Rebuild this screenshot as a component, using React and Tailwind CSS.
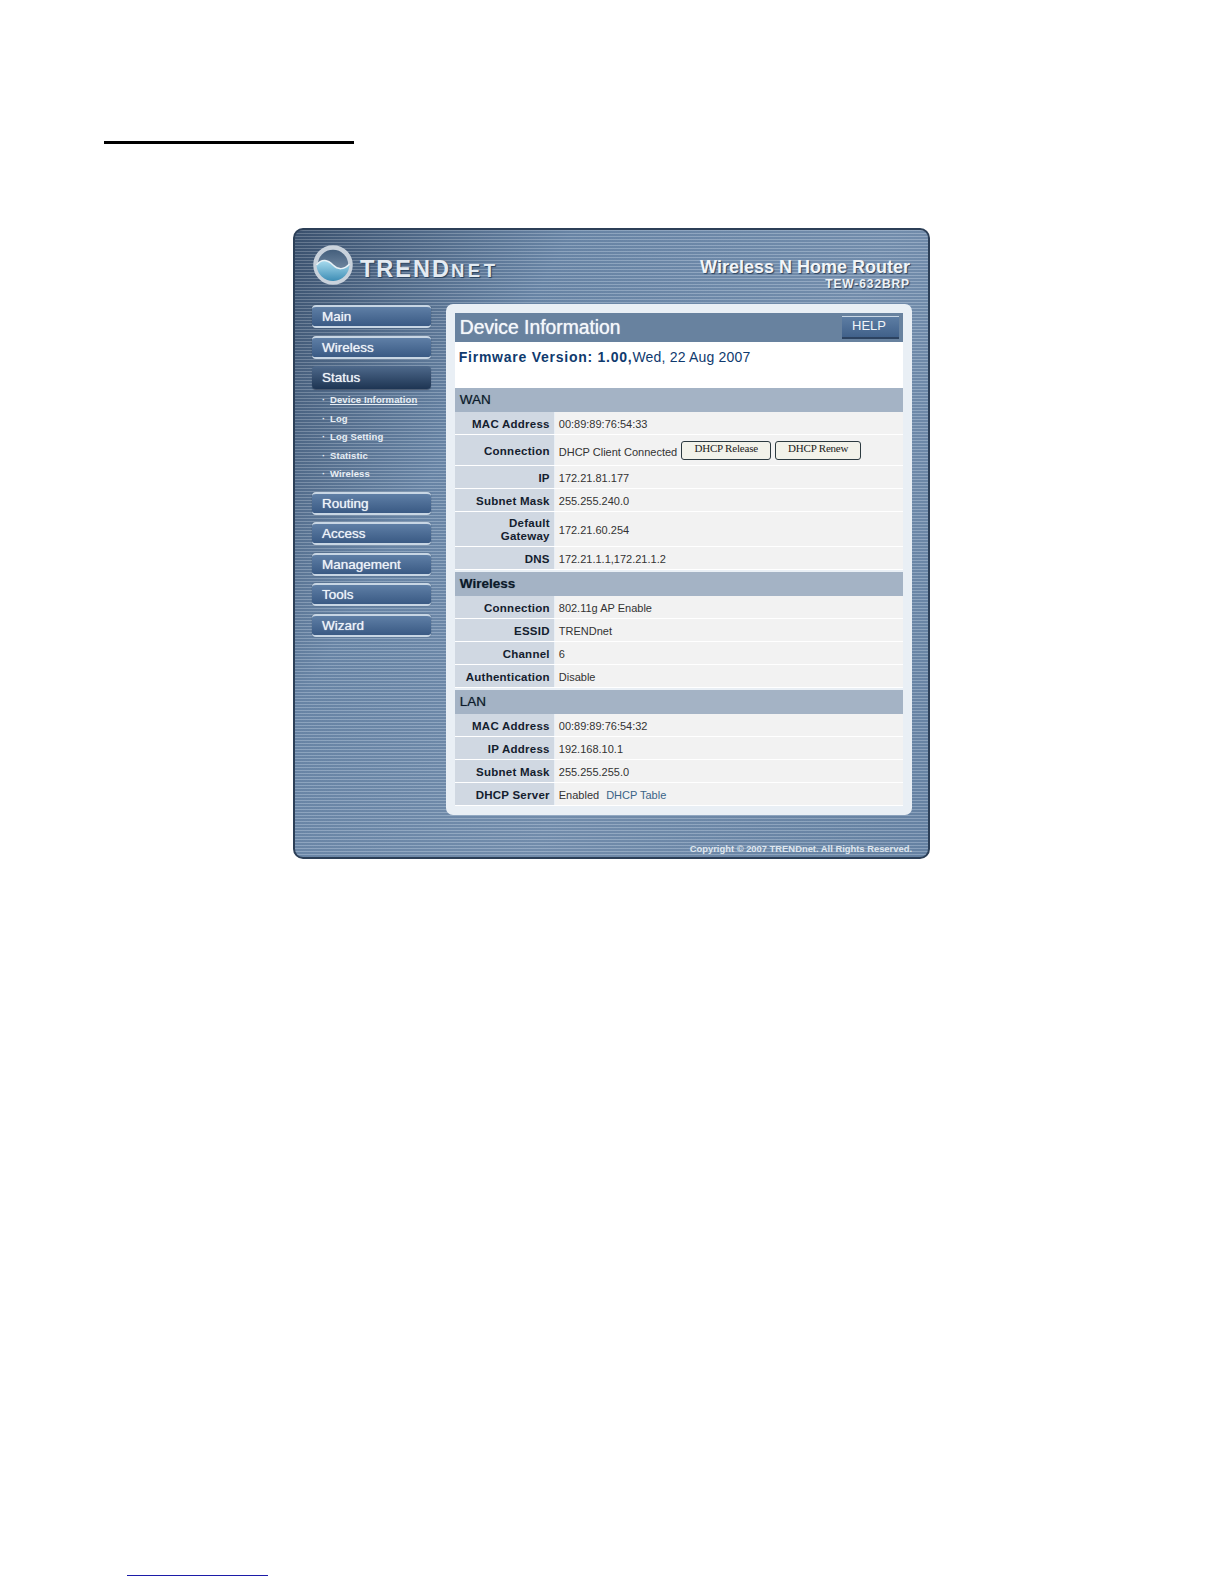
import React from "react";

const stripes = "bg-[repeating-linear-gradient(180deg,rgba(255,255,255,0.2)_0px,rgba(255,255,255,0.2)_1px,rgba(40,60,90,0.1)_1px,rgba(40,60,90,0.1)_3px)]";

function NavButton({ label, active }) {
  return (
    <div
      className={
        active
          ? "h-[23px] w-[119px] rounded-sm bg-gradient-to-b from-[#4f6a8c] to-[#1e3553] pl-[10px] text-[13.5px] leading-[24px] font-normal text-[#f0f4f8] shadow-[0_1px_1px_rgba(20,30,50,0.5)] [text-shadow:0_0_1px_#dfe7ef]"
          : "h-[23px] w-[119px] rounded-sm border-t-2 border-b-2 border-t-[#c8d6e4] border-b-[#c8d6e4] bg-gradient-to-b from-[#5f7fa6] to-[#3a5a84] pl-[10px] text-[13.5px] leading-[19px] font-normal text-[#eef3f8] shadow-[0_0_1px_rgba(20,30,50,0.7)] [text-shadow:0_0_1px_#dfe7ef]"
      }
    >
      {label}
    </div>
  );
}

function SubItem({ label, active }) {
  return (
    <div className="flex h-[18.5px] items-center pl-[10px] text-[9.5px] font-bold tracking-[0.1px] text-[#e8eef4]">
      <span className="w-[8px]">·</span>
      <span className={active ? "underline" : ""}>{label}</span>
    </div>
  );
}

function Section({ title }) {
  return (
    <div className="h-[24px] bg-[#a4b3c5] pl-[5px] text-[13.5px] leading-[23px] text-[#0c1a2a] [text-shadow:0_0_1px_#5a6878]">
      {title}
    </div>
  );
}

function Row({ label, children, h = "h-[23px]" }) {
  return (
    <div className={`flex ${h} border-b border-white`}>
      <div className="flex w-[99px] items-center justify-end bg-[#d0d8e2] pt-[2px] pr-[4px] text-right text-[11.5px] leading-[13px] font-bold tracking-[0.25px] text-[#14202e]">
        <span>{label}</span>
      </div>
      <div className="ml-px flex flex-1 items-center bg-[#f2f2f2] pt-[2px] pl-[4px] text-[11px] text-[#333]">
        {children}
      </div>
    </div>
  );
}

function FormButton({ label, w }) {
  return (
    <div
      className={`${w} -mt-[2px] flex h-[19px] items-start justify-center rounded-[3px] border border-[#2c3a40] bg-[#f2f2ea] font-['Liberation_Serif',serif] text-[11px] leading-[12px] tracking-[-0.2px] text-[#222]`}
    >
      {label}
    </div>
  );
}

function Logo() {
  return (
    <div className="flex items-center self-start">
      <svg width="40" height="40" viewBox="0 0 40 40">
        <defs>
          <linearGradient id="logoTop" x1="0" y1="0" x2="0" y2="1">
            <stop offset="0" stopColor="#3f5a78" />
            <stop offset="1" stopColor="#8da2b8" />
          </linearGradient>
          <linearGradient id="logoBottom" x1="0" y1="0" x2="0" y2="1">
            <stop offset="0" stopColor="#a9dcef" />
            <stop offset="1" stopColor="#3d8db5" />
          </linearGradient>
        </defs>
        <circle cx="20" cy="20" r="17.5" fill="url(#logoTop)" stroke="#c9d2dc" strokeWidth="4.5" />
        <path d="M3.5 20 C9 13 15 15 20 20 C25 25 31 25 36.5 19 A16.5 16.5 0 0 1 3.5 20 Z" fill="url(#logoBottom)" />
        <path d="M3.5 20 C9 13 15 15 20 20 C25 25 31 25 36.5 19" fill="none" stroke="#e8f1f6" strokeWidth="1.5" />
      </svg>
      <span className="ml-[7px] pt-[10px] text-[23.5px] leading-none font-bold tracking-[2px] text-[#e4ebf2] [text-shadow:1px_1px_1px_#27405c]">
        TREND<span className="text-[18.5px] tracking-[3.5px]">NET</span>
      </span>
    </div>
  );
}

export default function App() {
  return (
    <div className="h-[1584px] w-[1224px] overflow-hidden bg-white pt-[141px] pl-[104px] font-['Liberation_Sans',Arial,sans-serif]">
      <div className="h-[3px] w-[250px] bg-black" />
      <div className="mt-[84px] ml-[189px] h-[631px] w-[637px] overflow-hidden rounded-[10px] border-2 border-[#2c3f57] bg-[linear-gradient(120deg,#3c5370_0%,#6f8cad_28%,#7a95b4_60%,#6c89aa_100%)]">
        <div className={`flex h-full flex-col pr-[16px] ${stripes}`}>
          <div className="flex h-[74px] justify-between pt-[15px] pr-[2px] pl-[18px]">
            <Logo />
            <div className="pt-[12px] text-right">
              <div className="text-[18px] leading-[20px] font-bold text-[#f2f5f8] [text-shadow:1px_1px_1px_#2d435e]">
                Wireless N Home Router
              </div>
              <div className="text-[12px] leading-[14px] font-bold tracking-[0.9px] text-[#eef2f6] [text-shadow:1px_1px_1px_#2d435e]">
                TEW-632BRP
              </div>
            </div>
          </div>
          <div className="flex">
            <div className="w-[151px] pt-[1px] pl-[17px]">
              <div className="flex flex-col gap-[7.5px]">
                <NavButton label="Main" />
                <NavButton label="Wireless" />
                <NavButton label="Status" active />
              </div>
              <div className="mt-[2px] mb-[8px]">
                <SubItem label="Device Information" active />
                <SubItem label="Log" />
                <SubItem label="Log Setting" />
                <SubItem label="Statistic" />
                <SubItem label="Wireless" />
              </div>
              <div className="flex flex-col gap-[7.5px]">
                <NavButton label="Routing" />
                <NavButton label="Access" />
                <NavButton label="Management" />
                <NavButton label="Tools" />
                <NavButton label="Wizard" />
              </div>
            </div>
            <div className="h-[511px] w-[467px] rounded-[7px] bg-[#e9eff5] px-[9px] pt-[9px]">
              <div className="flex h-[29px] items-center justify-between bg-[#68829f] pr-[4px] pl-[5px]">
                <span className="pt-[1px] text-[19.3px] text-[#f4f7fa] [text-shadow:0_0_1px_#eef2f6]">Device Information</span>
                <span className="h-[23px] w-[57px] border-t border-b-2 border-t-[#c8d6e4] border-b-[#2c4260] bg-gradient-to-b from-[#5d7da3] to-[#41618a] pl-[10px] text-[13px] leading-[17px] text-[#f0f4f8]">
                  HELP
                </span>
              </div>
              <div className="h-[46px] bg-white pt-[6px] pl-[4px] text-[14px] leading-[18px] font-bold tracking-[0.75px] text-[#0f3a6e]">
                Firmware Version: 1.00,<span className="font-normal tracking-[0.2px]">Wed, 22 Aug 2007</span>
              </div>
              <Section title="WAN" />
              <Row label="MAC Address">00:89:89:76:54:33</Row>
              <Row label="Connection" h="h-[31px]">
                <span className="mt-[3px] mr-[4px]">DHCP Client Connected</span>
                <FormButton label="DHCP Release" w="w-[90px]" />
                <span className="w-[4px]" />
                <FormButton label="DHCP Renew" w="w-[86px]" />
              </Row>
              <Row label="IP">172.21.81.177</Row>
              <Row label="Subnet Mask">255.255.240.0</Row>
              <Row label={<>Default<br />Gateway</>} h="h-[35px]">172.21.60.254</Row>
              <Row label="DNS">172.21.1.1,172.21.1.2</Row>
              <div className="h-[2px]" />
              <Section title={<b>Wireless</b>} />
              <Row label="Connection">802.11g AP Enable</Row>
              <Row label="ESSID">TRENDnet</Row>
              <Row label="Channel">6</Row>
              <Row label="Authentication">Disable</Row>
              <div className="h-[2px]" />
              <Section title="LAN" />
              <Row label="MAC Address">00:89:89:76:54:32</Row>
              <Row label="IP Address">192.168.10.1</Row>
              <Row label="Subnet Mask">255.255.255.0</Row>
              <Row label="DHCP Server">
                Enabled<span className="ml-[7px] text-[#3a6488]">DHCP Table</span>
              </Row>
            </div>
          </div>
          <div className="mt-[27px] text-right text-[9.4px] font-bold text-[#dfe6ee]">
            Copyright © 2007 TRENDnet. All Rights Reserved.
          </div>
        </div>
      </div>
      <div className="mt-[716px] ml-[23px] h-[1px] w-[141px] bg-[#1c1ca8]" />
    </div>
  );
}
